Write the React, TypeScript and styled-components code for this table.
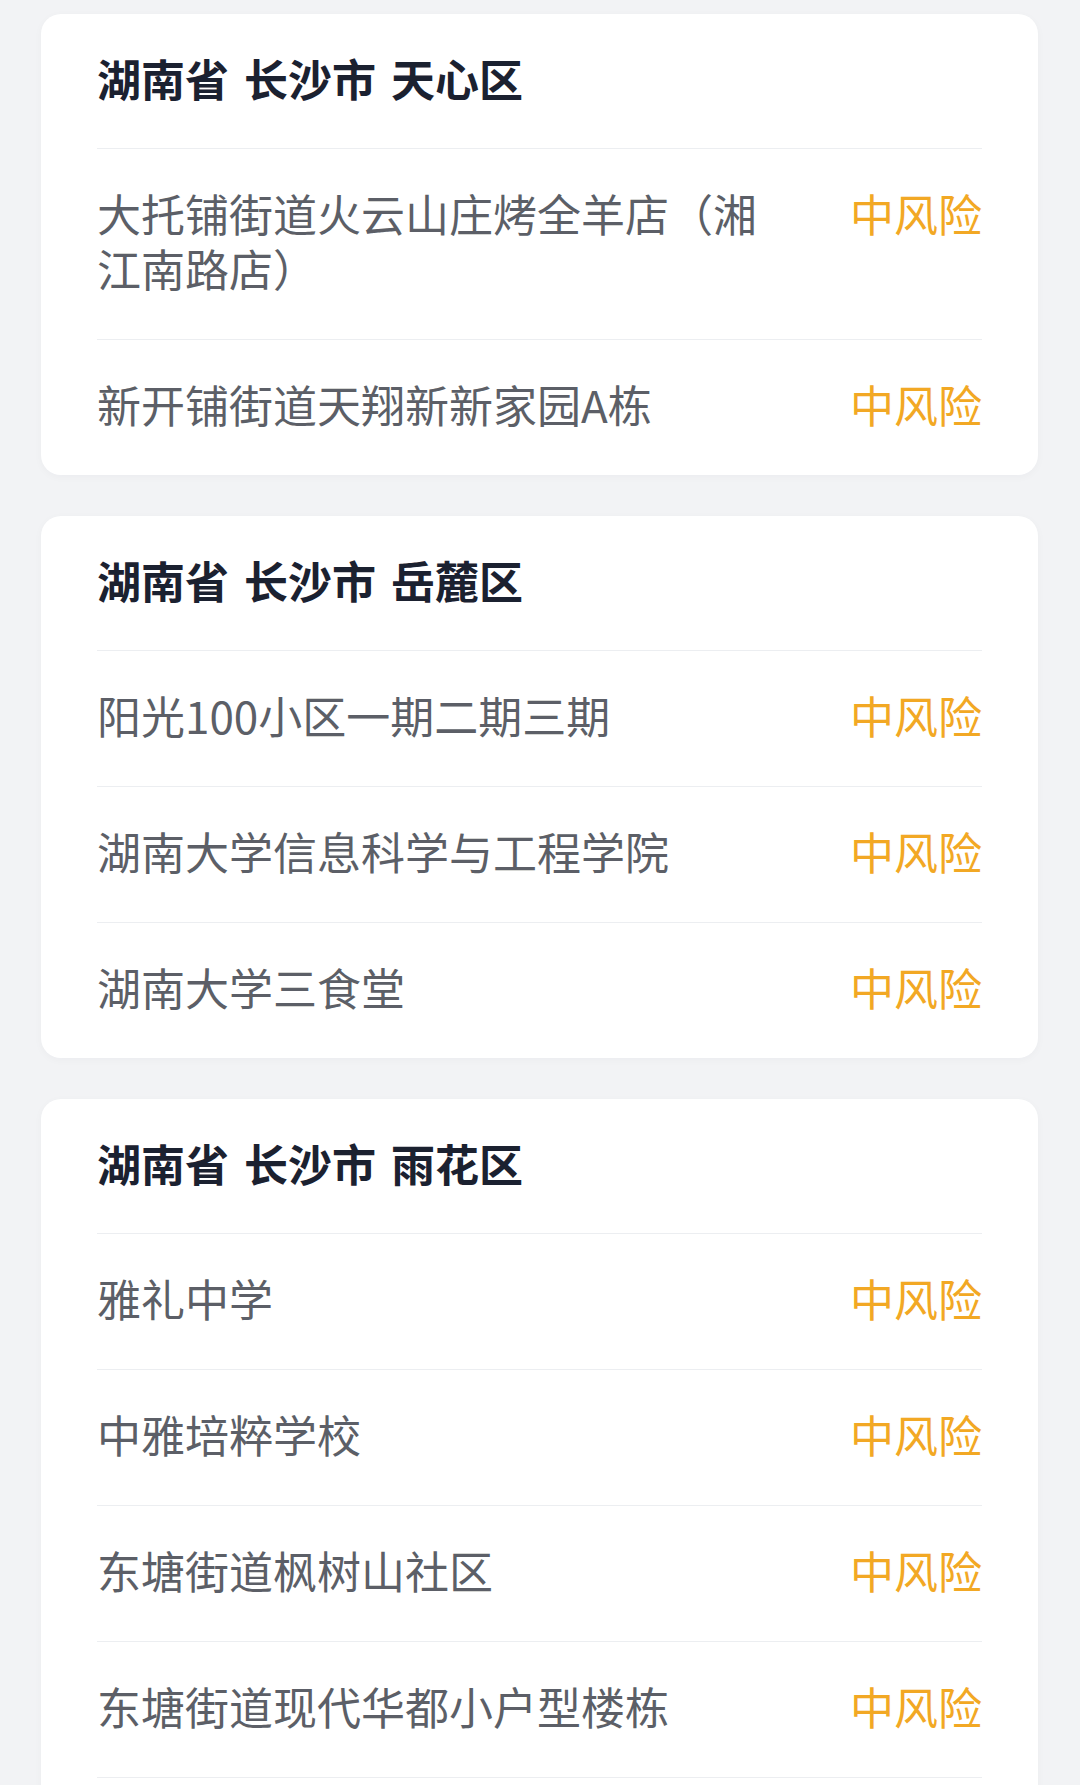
import styled, { createGlobalStyle } from "styled-components";

interface Place {
  name: string;
  level: string;
}

interface Area {
  region: string;
  places: Place[];
  // list keeps going below the fold
  more?: boolean;
}

const areas: Area[] = [
  {
    region: "湖南省 长沙市 天心区",
    places: [
      { name: "大托铺街道火云山庄烤全羊店（湘江南路店）", level: "中风险" },
      { name: "新开铺街道天翔新新家园A栋", level: "中风险" },
    ],
  },
  {
    region: "湖南省 长沙市 岳麓区",
    places: [
      { name: "阳光100小区一期二期三期", level: "中风险" },
      { name: "湖南大学信息科学与工程学院", level: "中风险" },
      { name: "湖南大学三食堂", level: "中风险" },
    ],
  },
  {
    region: "湖南省 长沙市 雨花区",
    more: true,
    places: [
      { name: "雅礼中学", level: "中风险" },
      { name: "中雅培粹学校", level: "中风险" },
      { name: "东塘街道枫树山社区", level: "中风险" },
      { name: "东塘街道现代华都小户型楼栋", level: "中风险" },
    ],
  },
];

export default function App() {
  return (
    <>
      <GlobalStyle />
      <Page>
        {areas.map((area) => (
          <Card key={area.region} $more={area.more}>
            <Region>{area.region}</Region>
            {area.places.map((place) => (
              <Row key={place.name}>
                <PlaceName>{place.name}</PlaceName>
                <Level>{place.level}</Level>
              </Row>
            ))}
          </Card>
        ))}
      </Page>
    </>
  );
}

const GlobalStyle = createGlobalStyle`
  html, body {
    margin: 0;
    padding: 0;
    background: #f2f3f5;
  }
  body {
    font-family: "Noto Sans CJK SC", "Noto Sans", sans-serif;
  }
`;

const Page = styled.div`
  display: flex;
  flex-direction: column;
  gap: 41px;
  height: 100vh;
  box-sizing: border-box;
  padding: 14px 42px 40px 41px;
  overflow: hidden;
  background: #f2f3f5;
`;

const Row = styled.div`
  display: flex;
  align-items: flex-start;
  gap: 64px;
  padding: 37px 0 43px;
  border-top: 1.5px solid #eceef1;
`;

const Card = styled.section<{ $more?: boolean }>`
  flex-shrink: 0;
  background: #ffffff;
  border-radius: 20px;
  padding: ${(p) => (p.$more ? "0 56px 200px" : "0 56px")};
  box-shadow: 0 2px 8px rgba(30, 40, 60, 0.03);

  ${Row}:last-child {
    border-bottom: ${(p) => (p.$more ? "1.5px solid #eceef1" : "none")};
  }
`;

const Region = styled.h2`
  margin: 0;
  padding: 37px 0 43px;
  font-size: 44px;
  line-height: 54px;
  font-weight: 700;
  color: #1b2130;
  word-spacing: 5px;
`;

const PlaceName = styled.div`
  flex: 1;
  font-size: 44px;
  line-height: 55px;
  color: #5c5f67;
`;

const Level = styled.div`
  flex-shrink: 0;
  font-size: 44px;
  line-height: 55px;
  color: #f2a824;
`;
